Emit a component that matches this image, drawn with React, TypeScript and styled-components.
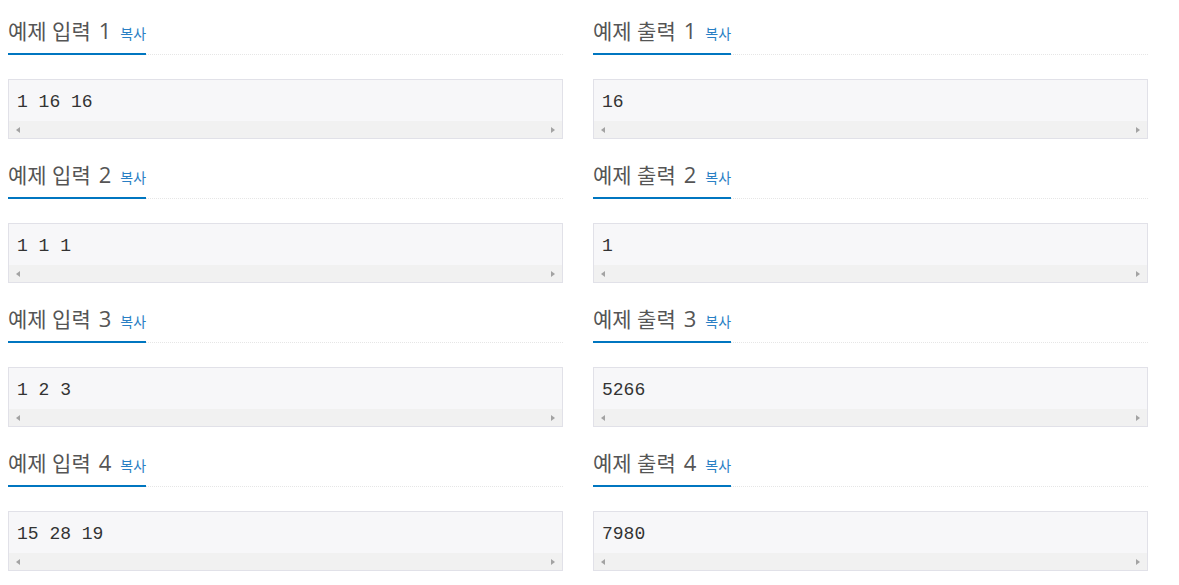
import React from "react";
import styled, { createGlobalStyle } from "styled-components";

const GlobalStyle = createGlobalStyle`
  body {
    margin: 0;
    background: #fff;
    font-family: "Open Sans", "Noto Sans CJK KR", sans-serif;
    color: #555;
  }
`;

const Page = styled.div`
  display: grid;
  grid-template-columns: 555px 555px;
  column-gap: 30px;
  padding: 17px 0 0 8px;
`;

const Column = styled.div`
  display: flex;
  flex-direction: column;
`;

const Section = styled.section`
  display: flex;
  flex-direction: column;
  margin-bottom: 22px;
`;

const Headline = styled.div`
  display: flex;
  border-bottom: 1px dotted #e6e6e6;
  margin-bottom: 24px;
`;

const Title = styled.h2`
  margin: 0 0 -1px;
  padding: 0 0 5px;
  height: 31px;
  font-family: "Open Sans", "Noto Sans CJK KR", sans-serif;
  font-size: 21px;
  font-weight: 400;
  line-height: 29px;
  color: #555;
  border-bottom: 2px solid #0076c0;
  display: flex;
  align-items: baseline;
`;

const Num = styled.span`
  font-size: 22px;
  line-height: 22px;
  margin-left: 8px;
`;

const Copy = styled.a`
  font-family: "Noto Sans CJK KR", sans-serif;
  font-size: 14px;
  line-height: 20px;
  color: #2a7fc4;
  margin-left: 9px;
  text-decoration: none;
`;

const Box = styled.div`
  border: 1px solid #e1e1e8;
  background: #f7f7f9;
  display: flex;
  flex-direction: column;
`;

const Data = styled.pre`
  margin: 0;
  padding: 12px 8px 8px;
  height: 21px;
  font-family: "Liberation Mono", "Courier New", monospace;
  font-size: 18px;
  line-height: 21px;
  color: #333;
`;

const Scroll = styled.div`
  height: 17px;
  background: #f1f1f1;
  display: flex;
  align-items: center;
  justify-content: space-between;
  padding: 0 7px;
`;

const Arrow = styled.span<{ $dir: "left" | "right" }>`
  width: 0;
  height: 0;
  border-top: 3px solid transparent;
  border-bottom: 3px solid transparent;
  ${(p) =>
    p.$dir === "left"
      ? "border-right: 4px solid #a3a3a3;"
      : "border-left: 4px solid #a3a3a3;"}
`;

const Sample = ({ title, num, value }: { title: string; num: number; value: string }) => (
  <Section>
    <Headline>
      <Title>
        {title}
        <Num>{num}</Num>
        <Copy href="#">복사</Copy>
      </Title>
    </Headline>
    <Box>
      <Data>{value}</Data>
      <Scroll>
        <Arrow $dir="left" />
        <Arrow $dir="right" />
      </Scroll>
    </Box>
  </Section>
);

const inputs = ["1 16 16", "1 1 1", "1 2 3", "15 28 19"];
const outputs = ["16", "1", "5266", "7980"];

export default function App() {
  return (
    <>
      <GlobalStyle />
      <Page>
        <Column>
          {inputs.map((v, i) => (
            <Sample key={i} title="예제 입력" num={i + 1} value={v} />
          ))}
        </Column>
        <Column>
          {outputs.map((v, i) => (
            <Sample key={i} title="예제 출력" num={i + 1} value={v} />
          ))}
        </Column>
      </Page>
    </>
  );
}
